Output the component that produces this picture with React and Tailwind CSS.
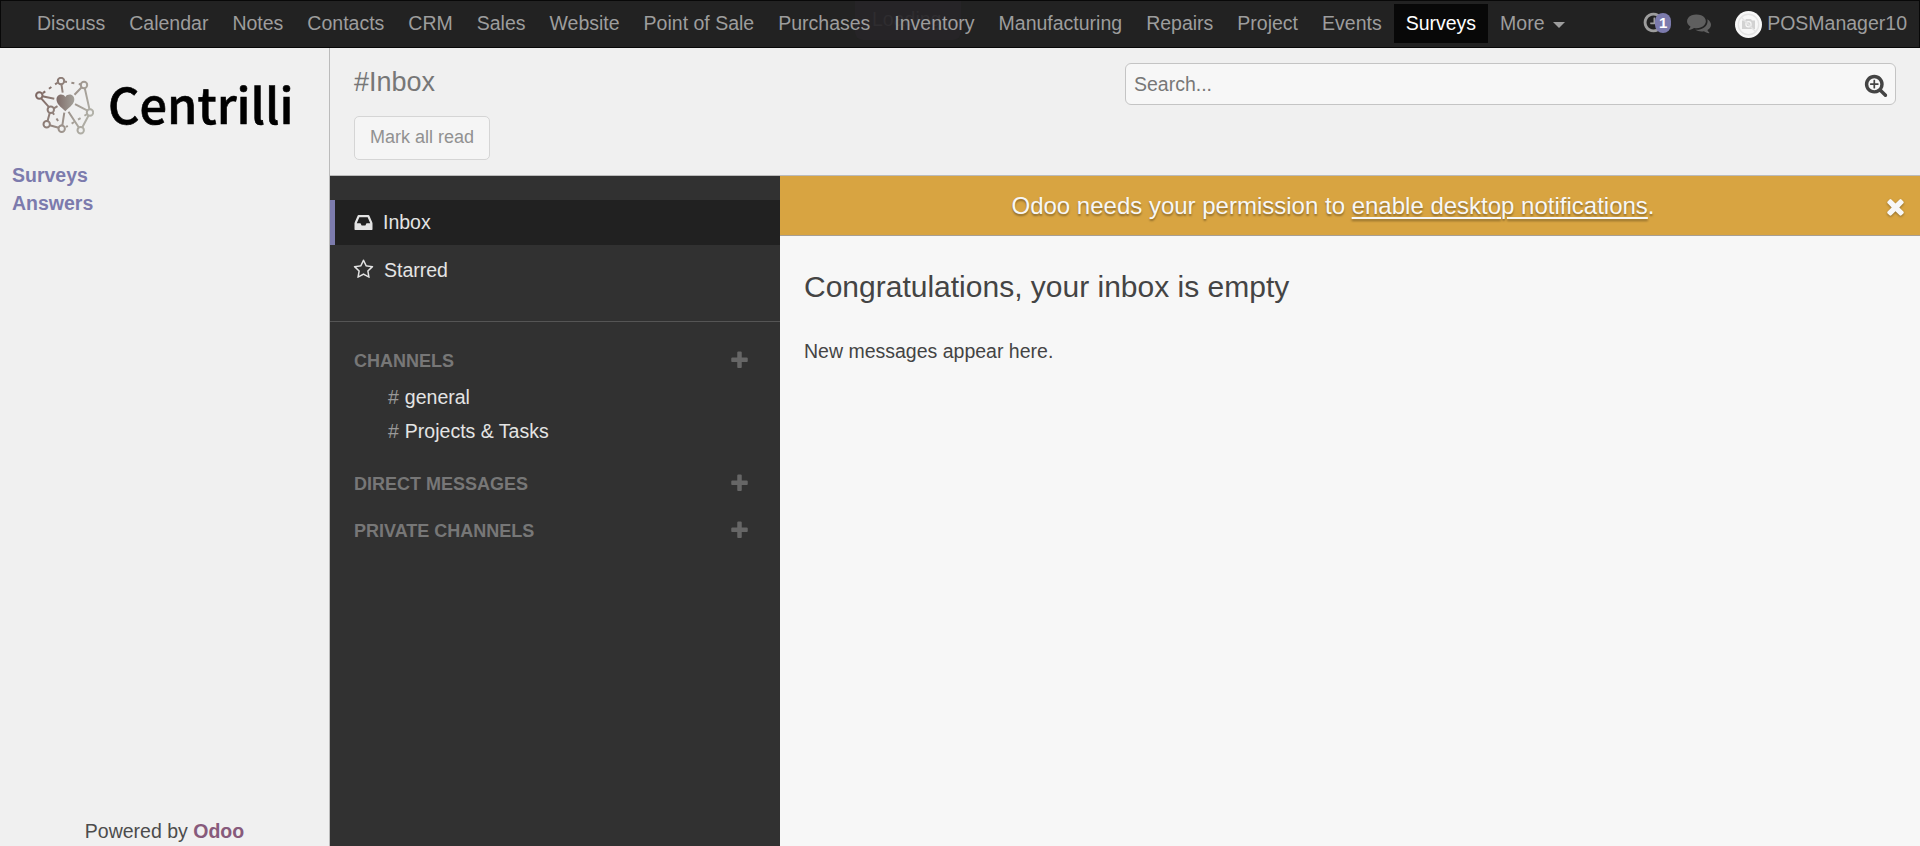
import React from "react";

const PATHS = {
  plus: "M1600 736v192q0 40-28 68t-68 28h-416v416q0 40-28 68t-68 28h-192q-40 0-68-28t-28-68v-416h-416q-40 0-68-28t-28-68v-192q0-40 28-68t68-28h416v-416q0-40 28-68t68-28h192q40 0 68 28t28 68v416h416q40 0 68 28t28 68z",
  searchPlus:
    "M1088 800v64q0 13-9.5 22.5t-22.5 9.5h-224v224q0 13-9.5 22.5t-22.5 9.5h-64q-13 0-22.5-9.5t-9.5-22.5v-224h-224q-13 0-22.5-9.5t-9.5-22.5v-64q0-13 9.5-22.5t22.5-9.5h224v-224q0-13 9.5-22.5t22.5-9.5h64q13 0 22.5 9.5t9.5 22.5v224h224q13 0 22.5 9.5t9.5 22.5zm128 32q0-185-131.5-316.5t-316.5-131.5-316.5 131.5-131.5 316.5 131.5 316.5 316.5 131.5 316.5-131.5 131.5-316.5zm512 832q0 53-37.5 90.5t-90.5 37.5q-54 0-90-38l-343-342q-179 124-399 124-143 0-273.5-55.5t-225-150-150-225-55.5-273.5 55.5-273.5 150-225 225-150 273.5-55.5 273.5 55.5 225 150 150 225 55.5 273.5q0 220-124 399l343 343q37 37 37 90z",
  times:
    "M1490 1322q0 40-28 68l-136 136q-28 28-68 28t-68-28l-294-294-294 294q-28 28-68 28t-68-28l-136-136q-28-28-28-68t28-68l294-294-294-294q-28-28-28-68t28-68l136-136q28-28 68-28t68 28l294 294 294-294q28-28 68-28t68 28l136 136q28 28 28 68t-28 68l-294 294 294 294q28 28 28 68z",
  star: "M1201 1004l306-297-422-62-189-382-189 382-422 62 306 297-73 421 378-199 377 199zm527-357q0 22-26 48l-363 354 86 500q1 7 1 20 0 50-41 50-19 0-40-12l-449-236-449 236q-22 12-40 12-21 0-31.5-14.5t-10.5-35.5q0-6 2-20l86-500-364-354q-25-27-25-48 0-37 56-46l502-73 225-455q19-41 49-41t49 41l225 455 502 73q56 9 56 46z",
  comments:
    "M1408 768q0 139-94 257t-256.5 186.5-353.5 68.5q-86 0-176-16-124 88-278 128-36 9-86 16h-3q-11 0-20.5-8t-11.5-21q-1-3-1-6.5t.5-6.5 2-6l2.5-5 3.5-5.5 4-5 4.5-5 4-4.5q5-6 23-25t26-29.5 22.5-29 25-38.5 20.5-44q-124-72-195-177t-71-224q0-139 94-257t256.5-186.5 353.5-68.5 353.5 68.5 256.5 186.5 94 257zm384 256q0 120-71 224.5t-195 176.5q10 24 20.5 44t25 38.5 22.5 29 26 29.5 23 25q1 1 4 4.5t4.5 5 4 5 3.5 5.5l2.5 5 2 6 .5 6.5-1 6.5q-3 14-13 22t-22 7q-50-7-86-16-154-40-278-128-90 16-176 16-271 0-472-132 58 4 88 4 161 0 309-45t264-129q125-92 192-212t67-254q0-77-23-152 129 71 204 178t75 230z",
  clock:
    "M1024 544v448q0 14-9 23t-23 9h-320q-14 0-23-9t-9-23v-64q0-14 9-23t23-9h224v-352q0-14 9-23t23-9h64q14 0 23 9t9 23zm416 352q0-148-73-273t-198-198-273-73-273 73-198 198-73 273 73 273 198 198 273 73 273-73 198-198 73-273zm224 0q0 209-103 385.5t-279.5 279.5-385.5 103-385.5-103-279.5-279.5-103-385.5 103-385.5 279.5-279.5 385.5-103 385.5 103 279.5 279.5 103 385.5z",
  inbox:
    "M1151 960h316q-1-3-2.5-8.5t-2.5-7.5l-212-496h-708l-212 496q-1 3-2.5 8t-2.5 8h316l95 192h320zm513 30v482q0 26-19 45t-45 19h-1408q-26 0-45-19t-19-45v-482q0-62 25-123l238-552q10-25 36.5-42t52.5-17h832q26 0 52.5 17t36.5 42l238 552q25 61 25 123z",
};

function Icon({ name, className }) {
  return (
    <svg viewBox="0 0 1792 1792" fill="currentColor" className={`shrink-0 ${className}`}>
      <path d={PATHS[name]} />
    </svg>
  );
}

const MENU = [
  "Discuss", "Calendar", "Notes", "Contacts", "CRM", "Sales", "Website", "Point of Sale",
  "Purchases", "Inventory", "Manufacturing", "Repairs", "Project", "Events", "Surveys",
];

function Navbar() {
  return (
    <header className="relative flex h-12 shrink-0 items-center border border-[#080808] bg-[#222] pl-6 text-[#9d9d9d]">
      <div className="absolute left-[854px] top-0 h-[39px] w-[106px] rounded-b-lg bg-[#262427] pl-[17px] pt-[4px] text-[#2f2d30]">
        Loading
      </div>
      <nav className="relative mb-px flex h-[39px]">
        {MENU.map((item) => (
          <a
            key={item}
            className={`whitespace-nowrap px-[12px] leading-[38px] ${item === "Surveys" ? "bg-[#080808] text-white" : ""}`}
          >
            {item}
          </a>
        ))}
        <a className="flex items-center whitespace-nowrap px-[12px] leading-[38px]">
          <span className="mb-px">More</span>
          <span className="ml-[8px] mt-[3px] border-x-[6px] border-t-[6px] border-x-transparent border-t-[#9d9d9d]" />
        </a>
      </nav>
      <div className="ml-auto flex items-center pr-3">
        <div className="relative mr-4 h-[22px] w-[29px]">
          <Icon name="clock" className="-mt-[2px] h-[23px] w-[23px]" />
          <span className="absolute left-[13px] top-0 h-5 w-4 rounded-[9px] bg-[#7c7bad] text-center text-[15px] font-bold leading-[19px] text-white">
            1
          </span>
        </div>
        <Icon name="comments" className="mb-[3px] mr-6 h-6 w-6 text-[#5f5f5f]" />
        <svg viewBox="0 0 27 27" className="mr-[5px] h-[27px] w-[27px] shrink-0">
          <circle cx="13.5" cy="13.5" r="13.5" fill="#f7f7f7" />
          <circle cx="13.5" cy="13.5" r="10.2" fill="none" stroke="#e4e4e4" strokeWidth="1.4" />
          <path d="M7 9.5h3l1-1.5h5l1 1.5h3v8.500H7z" fill="#d2d2d2" />
          <circle cx="13.5" cy="13.300" r="2.600" fill="none" stroke="#f7f7f7" strokeWidth="1.200" />
          <path d="M6.300 6.300l14.400 14.400" stroke="#e4e4e4" strokeWidth="1.400" />
        </svg>
        <span className="mb-px">POSManager10</span>
      </div>
    </header>
  );
}

function LogoMark() {
  return (
    <svg viewBox="0 0 60 60" className="mt-[2px] h-[60px] w-[60px] shrink-0" fill="none" strokeWidth="2">
      <defs>
        <linearGradient id="mark" gradientUnits="userSpaceOnUse" x1="2" y1="20" x2="58" y2="40">
          <stop offset="0" stopColor="#7d6661" />
          <stop offset="1" stopColor="#b3b3aa" />
        </linearGradient>
        <linearGradient id="heart" x1="0" y1="0" x2="1" y2="0">
          <stop offset="0" stopColor="#7f6c68" />
          <stop offset="1" stopColor="#a3a099" />
        </linearGradient>
      </defs>
      <g stroke="url(#mark)">
        <circle cx="27" cy="4" r="3.200" />
        <circle cx="50" cy="8" r="3.200" />
        <circle cx="5.300" cy="18.500" r="3.200" />
        <circle cx="56" cy="35.500" r="3.200" />
        <circle cx="16.800" cy="32.700" r="3.200" />
        <circle cx="12.700" cy="47.200" r="3.200" />
        <circle cx="27.700" cy="51.800" r="3.200" />
        <circle cx="46.700" cy="53.300" r="3.200" />
        <path d="M27.400 7.200l1.300 8.500M47.700 10.200L40.500 17.700M8.300 19.200l12 2.500M7 21.200l8 9M15.800 35.700L13.500 44.200M15.700 48.200l9 2.500M28.300 48.700l2-13M34.500 34.700l10.500 16M41 27.200l12.500 6.500M50.700 10.900l4.800 21.500M54.700 38.200L48.200 50.500M19.500 31.700l4-2.500" />
        <path d="M23.500 5.700L8 16.700M30 4.500l17 3M18.500 35.200L27 48.700M53 37.200L32 50" strokeDasharray="3 4.500" />
      </g>
      <path
        d="M31.300 34.300C26.500 29.500 22.500 27 22.500 22.500c0-5.500 6.500-6.500 8.800-2.500C33.700 16 40.300 17 40.300 22.500c0 4.500-4.200 7-9 11.800z"
        fill="url(#heart)"
      />
    </svg>
  );
}

function Sidebar() {
  return (
    <aside className="flex w-[330px] shrink-0 flex-col border-r border-[#bbb] bg-[#f0f0f0]">
      <div className="flex h-[113px] items-start pl-[34px] pt-[27px]">
        <LogoMark />
        <span className="ml-[14px] whitespace-nowrap font-['Noto_Sans_CJK_SC','Noto_Sans',sans-serif] text-[48.7px] font-medium leading-[56px] text-black [-webkit-text-stroke:0.6px_black]">
          Centrilli
        </span>
      </div>
      <nav className="flex flex-col pl-3 font-bold leading-7 text-[#7c7bad]">
        <a>Surveys</a>
        <a>Answers</a>
      </nav>
      <div className="mt-auto pb-[1px] text-center leading-7">
        Powered by <a className="font-bold text-[#875a7b]">Odoo</a>
      </div>
    </aside>
  );
}

function ControlPanel() {
  return (
    <div className="flex h-[128px] shrink-0 justify-between border-b border-[#bbb] bg-[#f0f0f0] pl-6 pr-6">
      <div>
        <h1 className="mt-[16px] text-[27px] leading-[36px] text-[#777]">#Inbox</h1>
        <button className="mt-4 h-11 w-[136px] rounded-[5px] border border-[#d5d5d5] bg-[#f5f5f5] pb-[2px] text-[18px] text-[#919191]">
          Mark all read
        </button>
      </div>
      <div className="mt-[15px] flex h-[42px] w-[771px] items-center justify-between rounded-[6px] border border-[#c4c4c4] bg-[#f7f7f7] pl-[8px] pr-[7px]">
        <span className="mt-[2px] text-[#777]">Search...</span>
        <Icon name="searchPlus" className="mt-[2px] h-6 w-6 text-[#444]" />
      </div>
    </div>
  );
}

function SectionTitle({ children, className }) {
  return (
    <div className={`flex h-7 items-center justify-between pl-6 pr-[30px] text-[18px] font-bold text-[#777] ${className}`}>
      <span>{children}</span>
      <Icon name="plus" className="mb-0.5 h-[21px] w-[21px] text-[#666]" />
    </div>
  );
}

function Channel({ children }) {
  return (
    <div className="h-[34px] pl-[58px] leading-[34px] text-[#e4e4e4]">
      <span className="mr-[6px] text-[#999]">#</span>
      {children}
    </div>
  );
}

function Channels() {
  return (
    <div className="w-[450px] shrink-0 bg-[#313131] pt-6">
      <div className="flex h-[45px] items-center border-l-[5px] border-[#7c7bad] bg-[#212121] pl-[18px] text-[#e4e4e4]">
        <Icon name="inbox" className="h-[21px] w-[21px]" />
        <span className="ml-[9px] mt-px">Inbox</span>
      </div>
      <div className="mt-[3px] flex h-[45px] items-center pl-[23px] text-[#e4e4e4]">
        <Icon name="star" className="mb-[2px] h-[21px] w-[21px]" />
        <span className="ml-[10px] mt-px">Starred</span>
      </div>
      <div className="mt-[28px] border-t border-[#555]" />
      <SectionTitle className="mt-[25px]">CHANNELS</SectionTitle>
      <div className="mt-[5px]">
        <Channel>general</Channel>
        <Channel>Projects &amp; Tasks</Channel>
      </div>
      <SectionTitle className="mt-[22px]">DIRECT MESSAGES</SectionTitle>
      <SectionTitle className="mt-[19px]">PRIVATE CHANNELS</SectionTitle>
    </div>
  );
}

function Thread() {
  return (
    <main className="flex-1 bg-[#f7f7f7]">
      <div className="flex h-[60px] items-center border-b border-[#a89f93] bg-[#d8a441] pl-[3px] pr-3 text-[#f7f7f7]">
        <p className="flex-1 text-center text-[24px] [text-shadow:0_2px_2px_rgba(0,0,0,0.35)]">
          Odoo needs your permission to <a className="underline decoration-2 underline-offset-[3px]">enable desktop notifications</a>.
        </p>
        <Icon name="times" className="mt-[2px] h-[25px] w-[25px] drop-shadow-[0_1px_1px_rgba(0,0,0,0.35)]" />
      </div>
      <div className="px-6">
        <h2 className="mt-[34px] text-[30px] leading-[34px] text-[#444]">Congratulations, your inbox is empty</h2>
        <p className="mt-[33px] leading-7 text-[#444]">New messages appear here.</p>
      </div>
    </main>
  );
}

export default function App() {
  return (
    <div className="flex h-screen w-full flex-col overflow-hidden bg-[#f0f0f0] font-['Liberation_Sans',Arial,sans-serif] text-[19.5px] text-[#4c4c4c]">
      <Navbar />
      <div className="flex min-h-0 flex-1">
        <Sidebar />
        <div className="flex min-w-0 flex-1 flex-col">
          <ControlPanel />
          <div className="flex min-h-0 flex-1">
            <Channels />
            <Thread />
          </div>
        </div>
      </div>
    </div>
  );
}
